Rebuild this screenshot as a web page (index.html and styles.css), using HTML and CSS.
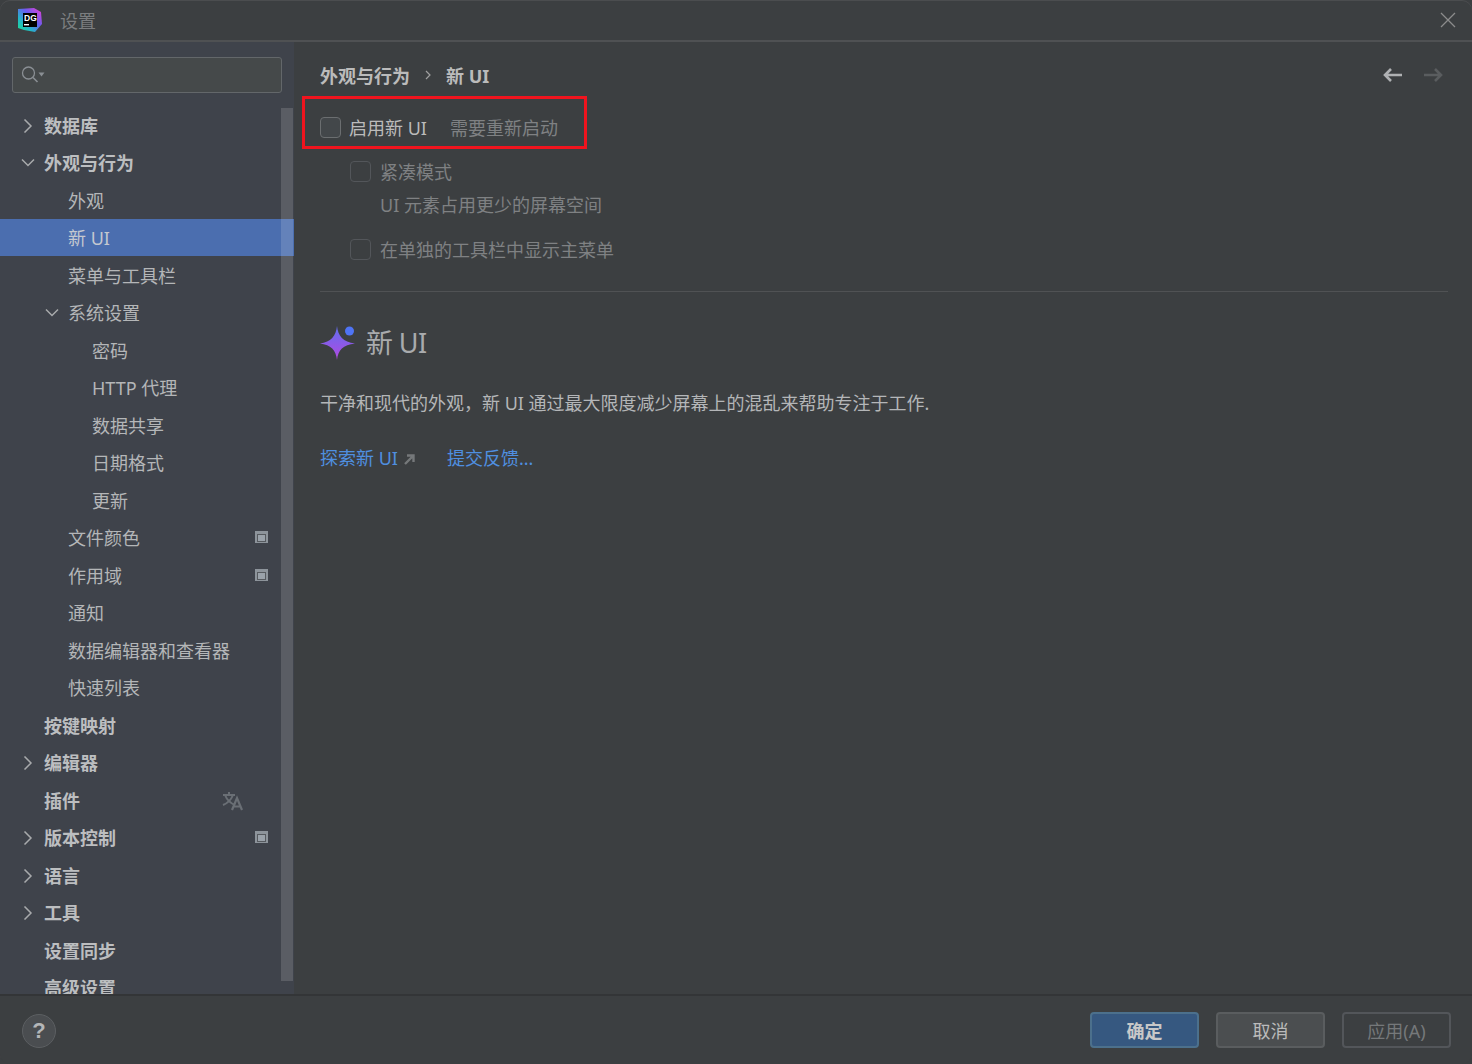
FILE: index.html
```html
<!DOCTYPE html>
<html lang="zh-CN">
<head>
<meta charset="utf-8">
<title>设置</title>
<link rel="stylesheet" href="styles.css">
</head>
<body>
<div class="window">
  <header class="titlebar">
    <div class="logo">
      <svg width="24" height="24" viewBox="0 0 24 24">
        <defs>
          <linearGradient id="lg" x1="0" y1="1" x2="1" y2="0"><stop offset="0" stop-color="#1fe08c"/><stop offset=".3" stop-color="#22b8c8"/><stop offset=".6" stop-color="#6a5cf0"/><stop offset="1" stop-color="#f03cd0"/></linearGradient>
        </defs>
        <path d="M0 1 L16 0 L23 4 L24 16 L17 24 L6 22 L0 20 Z" fill="url(#lg)"/>
        <rect x="5" y="5" width="14" height="14" fill="#000"/>
        <rect x="6" y="16" width="5" height="1.4" fill="#fff"/>
      </svg>
      <span class="logo-text">DG</span>
    </div>
    <span class="title">设置</span>
    <svg class="close" width="16" height="16" viewBox="0 0 16 16"><path d="M1 1 L15 15 M15 1 L1 15" stroke="#8c8c8c" stroke-width="1.3" fill="none"/></svg>
  </header>

  <div class="body">
    <aside class="sidebar">
      <div class="search">
        <svg width="26" height="20" viewBox="0 0 26 20"><circle cx="7.5" cy="8" r="6" fill="none" stroke="#8a8f94" stroke-width="1.3"/><path d="M12 12.5 L16.5 17" stroke="#8a8f94" stroke-width="1.6"/><path d="M17.5 7.5 L23.5 7.5 L20.5 11.5 Z" fill="#8a8f94"/></svg>
      </div>
      <ul class="tree">
        <li class="row l0 bold"><svg class="arrow" viewBox="0 0 14 14"><path d="M3.5 .5 L10 7 L3.5 13.5"/></svg>数据库</li>
        <li class="row l0 bold"><svg class="arrow" viewBox="0 0 14 14"><path d="M1 3.5 L7 9.5 L13 3.5"/></svg>外观与行为</li>
        <li class="row l1">外观</li>
        <li class="row l1 selected">新 UI</li>
        <li class="row l1">菜单与工具栏</li>
        <li class="row l1"><svg class="arrow" viewBox="0 0 14 14"><path d="M1 3.5 L7 9.5 L13 3.5"/></svg>系统设置</li>
        <li class="row l2">密码</li>
        <li class="row l2">HTTP 代理</li>
        <li class="row l2">数据共享</li>
        <li class="row l2">日期格式</li>
        <li class="row l2">更新</li>
        <li class="row l1">文件颜色<span class="scope"></span></li>
        <li class="row l1">作用域<span class="scope"></span></li>
        <li class="row l1">通知</li>
        <li class="row l1">数据编辑器和查看器</li>
        <li class="row l1">快速列表</li>
        <li class="row l0 bold">按键映射</li>
        <li class="row l0 bold"><svg class="arrow" viewBox="0 0 14 14"><path d="M3.5 .5 L10 7 L3.5 13.5"/></svg>编辑器</li>
        <li class="row l0 bold">插件<svg class="translate" width="22" height="20" viewBox="0 0 22 20"><path d="M1 4 H13 M7 1 V4 M3 4 C5 9 8 12 13 14 M11 4 C9 9 6 12 1 14" fill="none" stroke="#6a6f75" stroke-width="2"/><path d="M10 19 L15 7 L20 19 M11.5 15.5 H18.5" fill="none" stroke="#6a6f75" stroke-width="2.2"/></svg></li>
        <li class="row l0 bold"><svg class="arrow" viewBox="0 0 14 14"><path d="M3.5 .5 L10 7 L3.5 13.5"/></svg>版本控制<span class="scope"></span></li>
        <li class="row l0 bold"><svg class="arrow" viewBox="0 0 14 14"><path d="M3.5 .5 L10 7 L3.5 13.5"/></svg>语言</li>
        <li class="row l0 bold"><svg class="arrow" viewBox="0 0 14 14"><path d="M3.5 .5 L10 7 L3.5 13.5"/></svg>工具</li>
        <li class="row l0 bold">设置同步</li>
        <li class="row l0 bold">高级设置</li>
      </ul>
      <div class="scrollbar"></div>
    </aside>

    <main class="main">
      <div class="crumbs">
        <span class="crumb">外观与行为</span>
        <svg class="crumb-sep" width="8" height="12" viewBox="0 0 8 12"><path d="M2 2 L6 6 L2 10" fill="none" stroke="#a0a0a0" stroke-width="1.2"/></svg>
        <span class="crumb">新 UI</span>
        <span class="nav">
          <svg width="22" height="16" viewBox="0 0 22 16"><path d="M20 8 H3 M9 2 L3 8 L9 14" fill="none" stroke="#afb1b3" stroke-width="2.6"/></svg>
          <svg width="22" height="16" viewBox="0 0 22 16"><path d="M2 8 H19 M13 2 L19 8 L13 14" fill="none" stroke="#5a5d5f" stroke-width="2.6"/></svg>
        </span>
      </div>

      <div class="option first">
        <span class="check"></span>
        <span class="opt-label">启用新 UI</span>
        <span class="hint">需要重新启动</span>
        <div class="redbox"></div>
      </div>
      <div class="option sub compact">
        <span class="check off"></span>
        <span class="hint">紧凑模式</span>
      </div>
      <div class="subhint hint">UI 元素占用更少的屏幕空间</div>
      <div class="option sub menu">
        <span class="check off"></span>
        <span class="hint">在单独的工具栏中显示主菜单</span>
      </div>

      <hr class="divider">

      <div class="heading">
        <svg width="36" height="34" viewBox="0 0 36 34">
          <defs><linearGradient id="star" x1="0" y1="0" x2="0" y2="1"><stop offset="0" stop-color="#5f6ff0"/><stop offset="1" stop-color="#b348e0"/></linearGradient></defs>
          <path d="M17 0 C18 10 23 16 35 17.5 C23 19 18 24 17 34 C16 24 11 19 0 17.5 C11 16 16 10 17 0 Z" fill="url(#star)"/>
          <circle cx="29.5" cy="5" r="4.5" fill="#4f74f5"/>
        </svg>
        <span class="heading-text">新 UI</span>
      </div>
      <p class="desc">干净和现代的外观，新 UI 通过最大限度减少屏幕上的混乱来帮助专注于工作.</p>
      <div class="links">
        <a class="link">探索新 UI<svg class="ext" width="11" height="11" viewBox="0 0 11 11"><path d="M1 10 L8.5 2.5 M3 1.5 H9.5 V8" fill="none" stroke="#75787a" stroke-width="2.4"/></svg></a>
        <a class="link">提交反馈...</a>
      </div>
    </main>
  </div>

  <footer class="footer">
    <span class="help">?</span>
    <div class="buttons">
      <button class="btn primary">确定</button>
      <button class="btn">取消</button>
      <button class="btn disabled">应用(A)</button>
    </div>
  </footer>
</div>
</body>
</html>
```

FILE: styles.css
```css
* { box-sizing: border-box; }
html, body { margin: 0; padding: 0; height: 100%; }
body {
  background: #3c3f41;
  font-family: "Noto Sans", "Noto Sans CJK SC", sans-serif;
  font-size: 18px;
  color: #bbbbbb;
  overflow: hidden;
}
.window {
  width: 1472px;
  height: 1064px;
  display: flex;
  flex-direction: column;
  background: #3c3f41;
  border-radius: 10px;
  box-shadow: inset 0 1px 0 #4b4d4f;
}
.titlebar {
  height: 42px;
  flex: none;
  display: flex;
  align-items: center;
  padding: 0 16px 0 18px;
  border-bottom: 2px solid #4f5153;
}
.logo { width: 24px; height: 24px; position: relative; }
.logo svg { display: block; }
.logo-text {
  position: absolute;
  left: 6px;
  top: 5px;
  font-family: "Liberation Sans", sans-serif;
  font-size: 8.5px;
  font-weight: 700;
  line-height: 10px;
  color: #fff;
}
.title { margin-left: 18px; margin-top: 2px; color: #7b7d7f; font-size: 18px; line-height: 24px; }
.close { margin-left: auto; margin-bottom: 1px; }

.body { flex: 1; display: flex; min-height: 0; }
.sidebar {
  width: 294px;
  flex: none;
  background: #3f434b;
  position: relative;
  overflow: hidden;
  padding-top: 15px;
}
.search {
  margin: 0 12px;
  width: 270px;
  height: 36px;
  background: #45494a;
  border: 1px solid #63676a;
  border-radius: 3px;
  display: flex;
  align-items: center;
  padding-left: 8px;
}
.tree { list-style: none; margin: 13.5px 0 0; padding: 0; }
.row {
  height: 37.5px;
  line-height: 39.5px;
  position: relative;
  white-space: nowrap;
  color: #b4b6b8;
}
.l0 { padding-left: 44px; }
.l1 { padding-left: 68px; }
.l2 { padding-left: 92px; }
.bold { font-weight: 700; color: #bcbec0; }
.selected { height: 37px; margin-bottom: .5px; background: #4b6eaf; color: #c4c8d0; }
.arrow {
  position: absolute;
  width: 14px;
  height: 14px;
  top: 12px;
  left: 21px;
  fill: none;
  stroke: #a8aaac;
  stroke-width: 1.5;
}
.l1 .arrow { left: 45px; }
.scope {
  position: absolute;
  left: 255px;
  top: 12px;
  width: 13px;
  height: 12px;
  background: #9aa2aa;
  border: 2px solid #8d949b;
  border-top-width: 3px;
  border-bottom-width: 1px;
  box-shadow: inset 0 0 0 1px #565a5f;
}
.translate { position: absolute; left: 222px; top: 9px; }
.scrollbar {
  position: absolute;
  left: 281px;
  top: 66px;
  width: 12px;
  height: 873px;
  background: rgba(255, 255, 255, .14);
}

.main { flex: 1; min-width: 0; padding: 0 24px 0 26px; }
.crumbs {
  height: 32px;
  margin-top: 17px;
  display: flex;
  align-items: center;
  font-weight: 700;
  color: #bbbbbb;
}
.crumb-sep { margin: 0 14px 0 14px; }
.nav { margin-left: auto; margin-right: 4px; display: flex; gap: 18px; }
.option {
  display: flex;
  align-items: center;
  position: relative;
}
.first { height: 30px; margin-top: 21px; }
.check {
  width: 21px;
  height: 21px;
  flex: none;
  background: #43474a;
  border: 1px solid #6b6e70;
  border-radius: 4px;
}
.check.off { background: #3c3f41; border-color: #53565a; }
.opt-label { margin-left: 8px; color: #bbbbbb; }
.hint { color: #7f8183; }
.first .hint { margin-left: 23px; }
.sub { padding-left: 29.5px; }
.sub .hint { margin-left: 9.5px; }
.compact { height: 30px; margin-top: 14px; }
.subhint { padding-left: 60px; height: 30px; line-height: 30px; margin-top: 4px; }
.menu { height: 30px; margin-top: 14px; }
.redbox {
  position: absolute;
  left: -18px;
  top: -16px;
  width: 285px;
  height: 53px;
  border: 3px solid #f0141e;
  pointer-events: none;
}
.divider { border: 0; height: 1px; background: #505254; margin: 27px 0 0; }
.heading {
  display: flex;
  align-items: center;
  gap: 10px;
  margin-top: 33px;
  height: 36px;
}
.heading-text { font-size: 27px; line-height: 36px; color: #a9abad; letter-spacing: -.6px; }
.desc { margin: 27px 0 0; line-height: 30px; height: 30px; white-space: nowrap; color: #b4b6b8; }
.links { display: flex; gap: 32px; margin-top: 25px; line-height: 30px; height: 30px; }
.link { color: #4f8fe0; display: inline-flex; align-items: center; }
.ext { margin-left: 6px; margin-top: 3px; }

.footer {
  height: 70px;
  flex: none;
  border-top: 2px solid #333537;
  display: flex;
  align-items: center;
  padding: 0 21px 0 22px;
}
.help {
  width: 34px;
  height: 34px;
  margin-top: 2px;
  border-radius: 50%;
  background: #4a4d50;
  border: 1px solid #5c5f62;
  color: #b4b6b8;
  font-family: "Liberation Sans", sans-serif;
  font-weight: 700;
  font-size: 22px;
  line-height: 32px;
  text-align: center;
}
.buttons { margin-left: auto; display: flex; gap: 17px; }
.btn {
  width: 109px;
  height: 36px;
  background: #4b4e50;
  border: 2px solid #5a5d5f;
  border-radius: 4px;
  color: #bbbbbb;
  font: inherit;
  padding: 2px 0 0;
  line-height: 30px;
}
.btn.primary { background: #365880; border-color: #4c708c; font-weight: 700; color: #c8c8c8; }
.btn.disabled { background: #3c3f41; border-color: #53565a; color: #75787a; }
```
